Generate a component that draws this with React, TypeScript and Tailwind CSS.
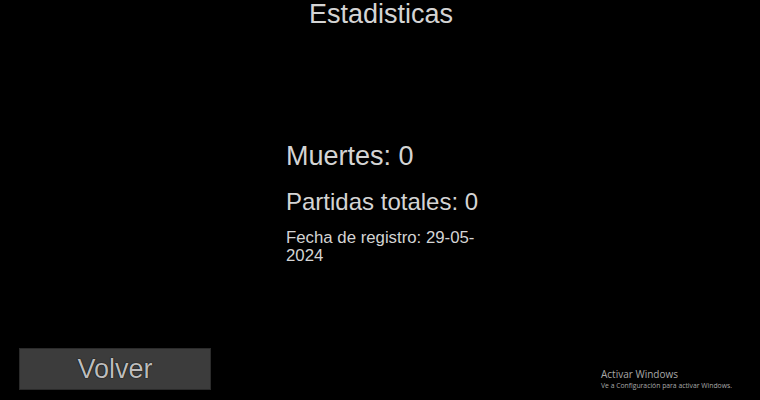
import React from 'react'

export default function App() {
    return (
        <div className="w-[760px] h-[400px] bg-black flex flex-col font-['Liberation_Sans',Arial,sans-serif] text-[#d4d4d4] overflow-hidden">
            <h1 className="text-center text-[27px] leading-[28px] pl-[2px]">Estadisticas</h1>

            <div className="pl-[286px] pt-[113px] flex flex-col">
                <p className="text-[27px] leading-[30px]">Muertes: 0</p>
                <p className="text-[24px] leading-[26px] mt-[18px]">Partidas totales: 0</p>
                <p className="text-[16.8px] leading-[18px] mt-[14px] w-[205px]">Fecha de registro: 29-05-2024</p>
            </div>

            <div className="mt-auto mb-[10px] px-[19px] flex items-end justify-between">
                <button className="w-[192px] h-[42px] bg-[#3c3c3c] border border-[#2b2b2b] text-[#bcbcbc] text-[27px] leading-none [text-shadow:0_0_1px_#000,0_0_1px_#000]">
                    Volver
                </button>
                <div className="mr-[9px] w-[131px] font-['Open_Sans',sans-serif] text-[#a8a8a8]">
                    <p className="text-[10px] leading-[13px]">Activar Windows</p>
                    <p className="text-[6.8px] leading-[9px] whitespace-nowrap">Ve a Configuración para activar Windows.</p>
                </div>
            </div>
        </div>
    )
}
